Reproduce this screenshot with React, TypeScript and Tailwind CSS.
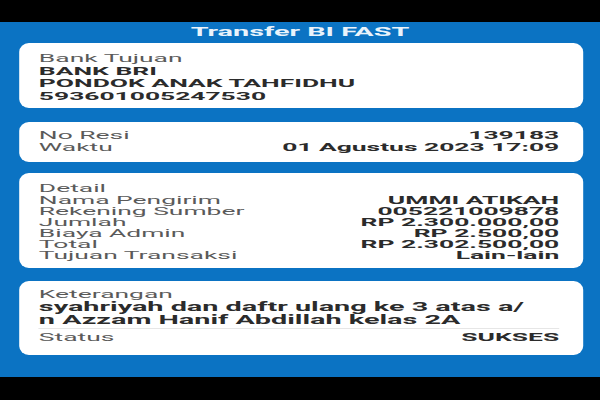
const rows = [
  { label: "Nama Pengirim", value: "UMMI ATIKAH" },
  { label: "Rekening Sumber", value: "005221009878" },
  { label: "Jumlah", value: "RP 2.300.000,00" },
  { label: "Biaya Admin", value: "RP 2.500,00" },
  { label: "Total", value: "RP 2.302.500,00" },
  { label: "Tujuan Transaksi", value: "Lain-lain" },
];

const Card = ({ className, children }: { className: string; children: any }) => {
  return (
    <div
      className={
        "mx-[7.5px] bg-white rounded-[4px_/_9px] pl-[8.7px] pr-[9.5px] text-[11px] " +
        className
      }
    >
      {children}
    </div>
  );
};

const Row = ({ label, value }: { label: string; value: string }) => (
  <div className="flex justify-between">
    <span className="text-[#5a5a5a]">{label}</span>
    <span className="font-bold text-[#2b2b2b]">{value}</span>
  </div>
);

export default function App() {
  return (
    <div
      className="w-[600px] h-[400px] bg-black flex flex-col overflow-hidden"
      style={{ fontFamily: 'Roboto, "Liberation Sans", Arial, sans-serif' }}
    >
      <div className="h-[22px] shrink-0 bg-black" />
      <div className="h-[355px] shrink-0 bg-[#0b73c3] overflow-hidden">
        <div className="w-[250px] origin-left scale-x-[2.4]">
          <div className="h-[21px] text-center text-[12px] leading-[21px] font-bold text-[#eaf3fb]">
            Transfer BI FAST
          </div>

          <Card className="h-[65px] pt-[10px] leading-[12.5px]">
            <div className="text-[#5a5a5a]">Bank Tujuan</div>
            <div className="font-bold text-[#2b2b2b]">BANK BRI</div>
            <div className="font-bold text-[#2b2b2b]">PONDOK ANAK TAHFIDHU</div>
            <div className="font-bold text-[#2b2b2b]">593601005247530</div>
          </Card>

          <Card className="mt-[14px] h-[40px] pt-[8px] leading-[12px]">
            <Row label="No Resi" value="139183" />
            <Row label="Waktu" value="01 Agustus 2023 17:09" />
          </Card>

          <Card className="mt-[11px] h-[95px] pt-[9px] leading-[11px]">
            <div className="text-[#5a5a5a] leading-[13px]">Detail</div>
            {rows.map((r) => (
              <Row key={r.label} label={r.label} value={r.value} />
            ))}
          </Card>

          <Card className="mt-[13px] h-[74px] pt-[7px]">
            <div className="text-[#5a5a5a] leading-[13px]">Keterangan</div>
            <div className="font-bold text-[12px] text-[#2b2b2b] leading-[12.5px] pb-[2px] border-b border-[#e6e6e6]">
              syahriyah dan daftr ulang ke 3 atas a/
              <br />n Azzam Hanif Abdillah kelas 2A
            </div>
            <div className="mt-[3px] leading-[12px]">
              <Row label="Status" value="SUKSES" />
            </div>
          </Card>
        </div>
      </div>
      <div className="flex-1 bg-black" />
    </div>
  );
}
